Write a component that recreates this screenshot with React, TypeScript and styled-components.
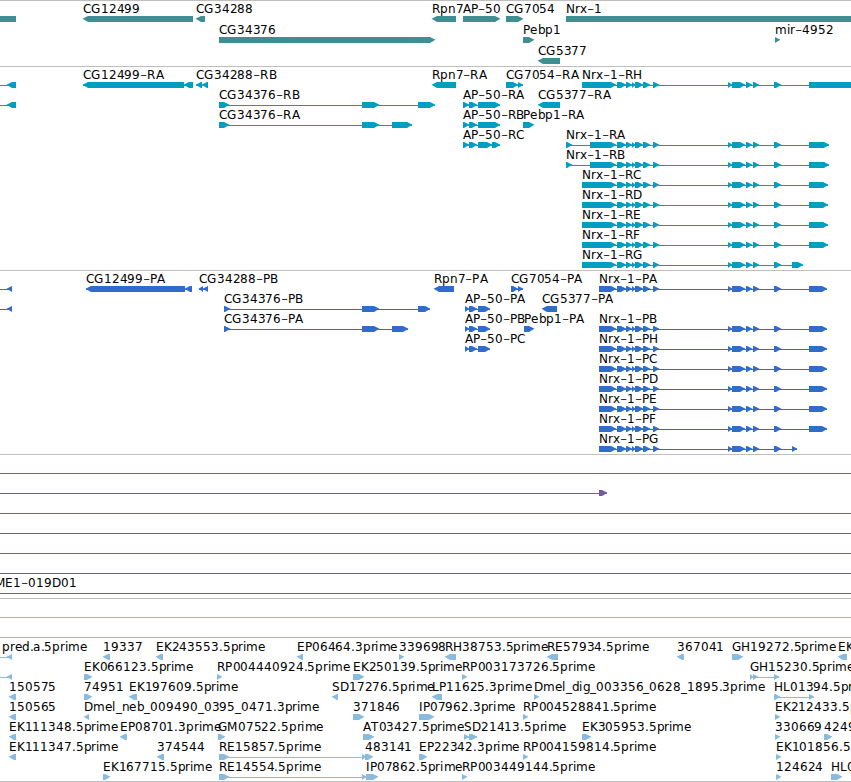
import * as React from 'react'
import styled, { createGlobalStyle } from 'styled-components'

const GlobalStyle = createGlobalStyle`
body {
margin: 0;
background: #fff;
overflow: hidden;
}
`;

const Browser = styled.main`
display: flex;
flex-direction: column;
width: 100%;
height: 782px;
overflow: hidden;
background: #fff;
`;

const Track = styled.section<{ $color: string, $pad: number }>`
flex: none;
display: flex;
flex-direction: column;
border-top: 1px solid #bebebe;
padding-bottom: ${p => p.$pad}px;
color: ${p => p.$color};
`;

const Lane = styled.svg<{ $height: number }>`
flex: none;
display: block;
width: 100%;
height: ${p => p.$height}px;
overflow: visible;
`;

const Label = styled.text`
fill: #000;
font-family: 'DejaVu Sans', sans-serif;
font-size: 12px;
white-space: pre;
`;

// the hyphen is drawn as wide as a digit
const Hyphen = styled.tspan`
font-size: 20px;
font-weight: 200;
`;

const Connector = styled.rect`
fill: currentColor;
shape-rendering: crispEdges;
`;

const Block = styled.polygon`
fill: currentColor;
`;

type Span = [number, number]

interface IFeature {
  label?: string,
  labelX?: number,
  reverse?: boolean,
  // start of the connector when it runs in from outside the view
  from?: number,
  to?: number,
  parts: Span[]
}

interface ITrack {
  id: string,
  color: string,
  laneHeight: number,
  pad: number,
  lanes: IFeature[][]
}

const BASELINE = 12
const BAR_Y = 15
const HEAD = 5

const ADVANCE: { [key: string]: number } = {
  '-': 7, '.': 3.8, '_': 6,
  A: 8.2, B: 8.2, C: 8.4, D: 9.2, E: 7.6, F: 6.9, G: 9.3, H: 9, I: 3.5, K: 7.9, L: 6.7, M: 10.4,
  N: 9, P: 7.2, R: 8.3, S: 7.6, T: 7.3,
  a: 7.4, b: 7.6, d: 7.6, e: 7.4, g: 7.6, i: 3.3, l: 3.3, m: 11.7, n: 7.6, p: 7.6, r: 4.9, x: 7.1,
}
const DIGIT = 7.9

const charPositions = (text: string, start: number) => {
  let x = start
  return text.split('').map((c) => {
    const at = Math.round(x)
    x += ADVANCE[c] || DIGIT
    return at
  }).join(' ')
}

const charBaselines = (text: string) => (
  text.split('').map((c) => c === '-' ? BASELINE + 2 : BASELINE).join(' ')
)

const fwd = (label: string, ...parts: Span[]): IFeature => ({ label, parts })
const rev = (label: string, ...parts: Span[]): IFeature => ({ label, parts, reverse: true })
const incoming = (start: number, end: number): IFeature => ({ from: -10, reverse: true, parts: [[start, end]] })
const through = (): IFeature => ({ from: -10, to: 900, parts: [] })

const NRX_EXONS: Span[] = [
  [617, 626], [626, 632], [632, 635], [635, 643], [643, 650], [653, 659],
  [728, 732], [732, 745], [746, 752], [753, 759], [774, 781],
]

const nrx = (label: string, head: Span[], tail: Span) => fwd(label, ...head, ...NRX_EXONS, tail)

const tracks: ITrack[] = [
  {
    id: 'gene', color: '#3f8f92', laneHeight: 21, pad: 2,
    lanes: [
      [
        { reverse: true, parts: [[-20, 16]] },
        rev('CG12499', [83, 193]), rev('CG34288', [196, 205]), rev('Rpn7', [432, 456]),
        fwd('AP-50', [463, 500]), fwd('CG7054', [506, 523]), fwd('Nrx-1', [566, 900]),
      ],
      [fwd('CG34376', [219, 435]), fwd('Pebp1', [523, 534]), fwd('mir-4952', [775, 780])],
      [rev('CG5377', [538, 560])],
    ],
  },
  {
    id: 'transcript', color: '#009ec0', laneHeight: 20, pad: 3,
    lanes: [
      [
        incoming(7, 16), rev('CG12499-RA', [83, 184], [184, 193]), rev('CG34288-RB', [196, 202], [202, 208]),
        rev('Rpn7-RA', [432, 456]), fwd('CG7054-RA', [506, 518], [518, 523]),
        nrx('Nrx-1-RH', [[582, 616]], [809, 900]),
      ],
      [
        incoming(7, 16), fwd('CG34376-RB', [219, 229], [362, 379], [418, 435]),
        fwd('AP-50-RA', [463, 469], [469, 477], [478, 500]), rev('CG5377-RA', [538, 560]),
      ],
      [
        fwd('CG34376-RA', [219, 229], [362, 379], [392, 412]),
        fwd('AP-50-RB', [463, 469], [469, 477], [478, 500]), fwd('Pebp1-RA', [523, 534]),
      ],
      [
        fwd('AP-50-RC', [463, 469], [469, 477], [478, 492], [492, 500]),
        nrx('Nrx-1-RA', [[566, 572], [590, 616]], [809, 829]),
      ],
      [nrx('Nrx-1-RB', [[566, 572], [590, 616]], [809, 829])],
      [nrx('Nrx-1-RC', [[582, 616]], [809, 828])],
      [nrx('Nrx-1-RD', [[582, 616]], [809, 828])],
      [nrx('Nrx-1-RE', [[582, 616]], [809, 828])],
      [nrx('Nrx-1-RF', [[582, 616]], [809, 828])],
      [nrx('Nrx-1-RG', [[582, 616]], [792, 803])],
    ],
  },
  {
    id: 'cds', color: '#306cce', laneHeight: 20, pad: 3,
    lanes: [
      [
        incoming(7, 12), rev('CG12499-PA', [86, 185], [185, 192]), rev('CG34288-PB', [199, 203], [203, 208]),
        rev('Rpn7-PA', [434, 454]), fwd('CG7054-PA', [511, 518], [518, 523]),
        nrx('Nrx-1-PA', [[599, 616]], [809, 827]),
      ],
      [
        incoming(7, 12), fwd('CG34376-PB', [224, 230], [362, 379], [418, 430]),
        fwd('AP-50-PA', [465, 469], [469, 477], [478, 490]), rev('CG5377-PA', [542, 557]),
      ],
      [
        fwd('CG34376-PA', [224, 230], [362, 379], [392, 408]),
        fwd('AP-50-PB', [465, 469], [469, 477], [478, 490]), fwd('Pebp1-PA', [524, 534]),
        nrx('Nrx-1-PB', [[599, 616]], [809, 827]),
      ],
      [fwd('AP-50-PC', [465, 469], [469, 477], [478, 490]), nrx('Nrx-1-PH', [[599, 616]], [809, 827])],
      [nrx('Nrx-1-PC', [[599, 616]], [809, 827])],
      [nrx('Nrx-1-PD', [[599, 616]], [809, 827])],
      [nrx('Nrx-1-PE', [[599, 616]], [809, 827])],
      [nrx('Nrx-1-PF', [[599, 616]], [809, 827])],
      [nrx('Nrx-1-PG', [[599, 616]], [792, 797])],
    ],
  },
  {
    id: 'clone', color: '#7458a8', laneHeight: 20, pad: 3,
    lanes: [
      [through()],
      [{ from: -10, parts: [[599, 607]] }],
      [through()],
      [through()],
      [through()],
      [through()],
      [{ ...through(), label: 'ME1-019D01', labelX: -5 }],
    ],
  },
  {
    id: 'est', color: '#88bbdd', laneHeight: 20, pad: 2,
    lanes: [
      [through()],
      [through()],
      [
        { ...incoming(7, 12), label: 'pred.a.5prime', labelX: 2 },
        rev('19337', [103, 110]), rev('EK243553.5prime', [156, 163]), rev('EP06464.3prime', [297, 303]),
        fwd('339698', [399, 404]), rev('RH38753.5prime', [445, 456]), rev('RE57934.5prime', [547, 558]),
        rev('367041', [677, 684]), fwd('GH19272.5prime', [732, 743]), rev('EK', [838, 847]),
      ],
      [
        incoming(7, 12), fwd('EK066123.5prime', [84, 92]), fwd('RP004440924.5prime', [217, 222]),
        fwd('EK250139.5prime', [353, 364]), fwd('RP003173726.5prime', [462, 467]),
        fwd('GH15230.5prime', [750, 753], [753, 758], [774, 779]),
      ],
      [
        rev('150575', [9, 16]), fwd('74951', [84, 92]), rev('EK197609.5prime', [129, 137]),
        rev('SD17276.5prime', [332, 338]), rev('LP11625.3prime', [432, 442]),
        fwd('Dmel_dig_003356_0628_1895.3prime', [534, 539]), fwd('HL01394.5prime', [774, 780], [809, 814]),
      ],
      [
        rev('150565', [9, 16]), rev('Dmel_neb_009490_0395_0471.3prime', [84, 89]), fwd('371846', [353, 364]),
        fwd('IP07962.3prime', [419, 434]), fwd('RP004528841.5prime', [523, 528]),
        fwd('EK212433.5prime', [775, 780]),
      ],
      [
        rev('EK111348.5prime', [9, 16]), rev('EP08701.3prime', [120, 127]), fwd('GM07522.5prime', [218, 225]),
        fwd('AT03427.5prime', [363, 374]), fwd('SD21413.5prime', [464, 469], [469, 477]),
        fwd('EK305953.5prime', [582, 591]), fwd('330669', [775, 780]), fwd('4249', [824, 832]),
      ],
      [
        rev('EK111347.5prime', [9, 16]), rev('374544', [157, 164]),
        fwd('RE15857.5prime', [219, 229], [362, 366]), fwd('483141', [365, 373]),
        fwd('EP22342.3prime', [419, 427]), fwd('RP004159814.5prime', [523, 528]),
        fwd('EK101856.5prime', [776, 781]),
      ],
      [
        fwd('EK167715.5prime', [103, 110]), fwd('RE14554.5prime', [219, 229], [362, 366]),
        fwd('IP07862.5prime', [366, 378]), fwd('RP003449144.5prime', [462, 467]),
        fwd('124624', [776, 781]), fwd('HL0', [831, 842]),
      ],
    ],
  },
]

const blockPoints = ([start, end]: Span, reverse?: boolean) => {
  const head = Math.min(HEAD, end - start)
  const top = BAR_Y
  const mid = BAR_Y + 2.8
  const bottom = BAR_Y + 6
  if (reverse) {
    return `${end},${top} ${start + head},${top} ${start - 0.5},${mid} ${start + head},${bottom} ${end},${bottom}`
  }
  return `${start},${top} ${end - head},${top} ${end + 0.5},${mid} ${end - head},${bottom} ${start},${bottom}`
}

const Feature = ({ feature }: { feature: IFeature }) => {
  const { label, parts, reverse } = feature
  const first = parts.length ? parts[0][0] : 0
  const last = parts.length ? parts[parts.length - 1][1] : 0
  const from = feature.from !== undefined ? feature.from : first
  const to = feature.to !== undefined ? feature.to : last
  const labelX = feature.labelX !== undefined ? feature.labelX : first
  const connected = parts.length !== 1 || feature.from !== undefined
  return (
    <g>
      {connected && <Connector x={from} y={BAR_Y + 3} width={to - from} height={1}/>}
      {parts.map((part) => (
        <Block key={part[0]} points={blockPoints(part, reverse)}/>
      ))}
      {label && (
        <Label x={charPositions(label, labelX)} y={charBaselines(label)}>
          {label.split('-').map((piece, i) => (
            <React.Fragment key={i}>
              {i > 0 && <Hyphen>-</Hyphen>}
              {piece}
            </React.Fragment>
          ))}
        </Label>
      )}
    </g>
  )
}

const App = () => (
  <Browser>
    <GlobalStyle/>
    {tracks.map((track) => (
      <Track key={track.id} $color={track.color} $pad={track.pad}>
        {track.lanes.map((lane, i) => (
          <Lane key={i} $height={track.laneHeight}>
            {lane.map((feature, j) => <Feature key={j} feature={feature}/>)}
          </Lane>
        ))}
      </Track>
    ))}
    <Track $color="#000" $pad={0}/>
  </Browser>
)

export default App
